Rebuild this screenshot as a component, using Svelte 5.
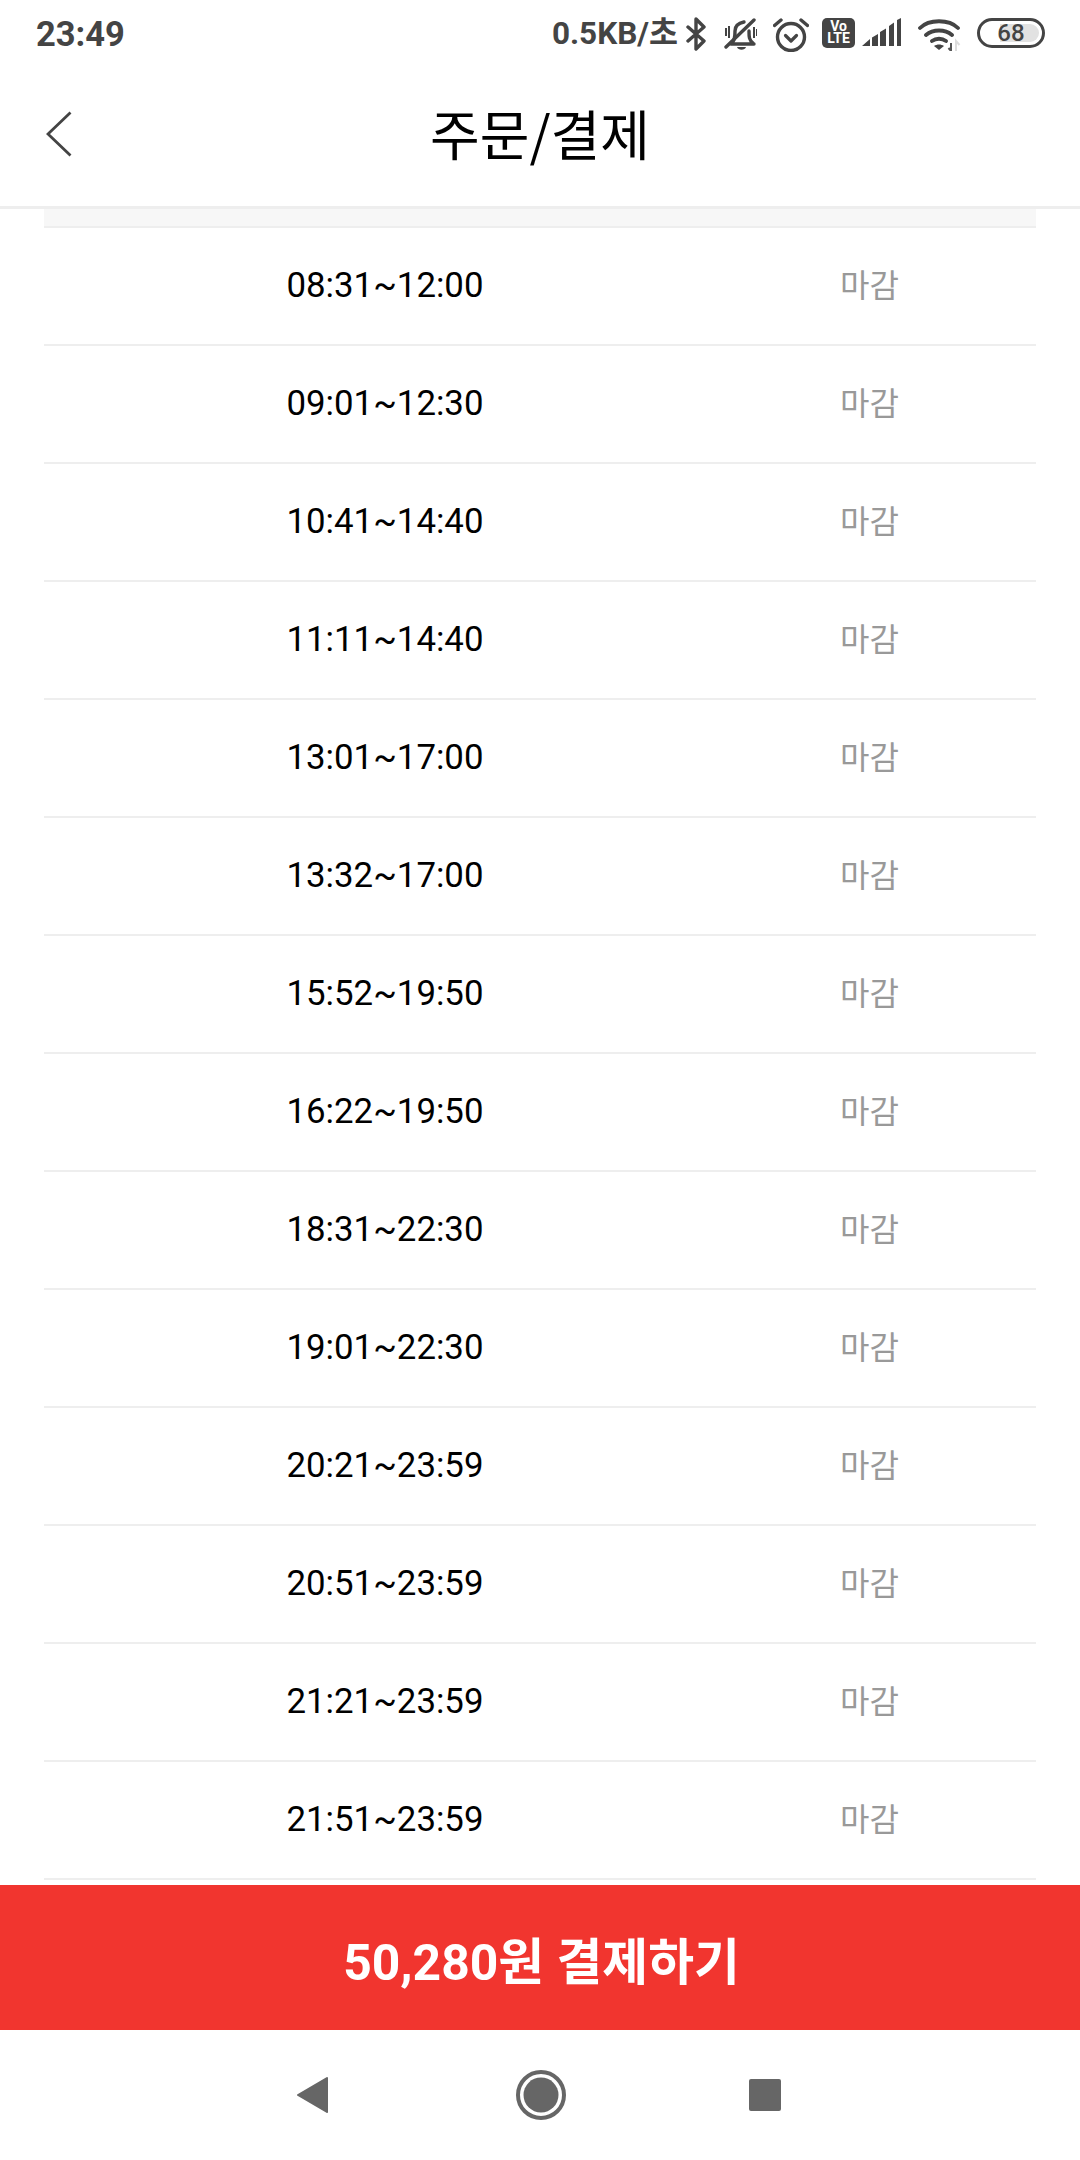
<script lang="ts">
  const slots = [
    "08:31~12:00",
    "09:01~12:30",
    "10:41~14:40",
    "11:11~14:40",
    "13:01~17:00",
    "13:32~17:00",
    "15:52~19:50",
    "16:22~19:50",
    "18:31~22:30",
    "19:01~22:30",
    "20:21~23:59",
    "20:51~23:59",
    "21:21~23:59",
    "21:51~23:59",
  ];
</script>

<div class="screen">
  <div class="status">
    <span class="clock">23:49</span>
    <div class="status-right">
      <span class="speed">0.5KB/초</span>
      <svg class="bt" width="21" height="34" viewBox="0 0 21 34">
        <path d="M2 10 18 24 10 32V2l8 8L2 24" fill="none" stroke="#444" stroke-width="3.4" stroke-linejoin="round" stroke-linecap="round" />
      </svg>
      <svg class="wide" width="34" height="33" viewBox="0 0 34 33">
        <path d="M9 25c3-3 3-7 3-12 0-5 4-8 9-9M26 13c0 6 0 9 4 12M8 26h23" fill="none" stroke="#444" stroke-width="3.4" stroke-linecap="round" />
        <path d="M3 29 31 2" stroke="#444" stroke-width="3.4" stroke-linecap="round" />
        <path d="M14 29h9c-1 3.500-8 3.500-9 0Z" fill="#444" />
        <path d="M3 10v8M6 8v12M31 9v11M34 11v7" stroke="#444" stroke-width="2" />
      </svg>
      <svg class="wide" width="36" height="35" viewBox="0 0 36 35">
        <circle cx="18" cy="20" r="13.500" fill="none" stroke="#444" stroke-width="3.400" />
        <path d="M12.500 18.500 18 24l5.500-5.500" fill="none" stroke="#444" stroke-width="3.200" stroke-linecap="round" stroke-linejoin="round" />
        <path d="M1.500 8.500 8 3M28 3l6.500 5.500" stroke="#444" stroke-width="3.400" stroke-linecap="round" />
      </svg>
      <svg class="volte" width="33" height="30" viewBox="0 0 33 30">
        <rect width="33" height="30" rx="5" fill="#444" />
        <text x="16.500" y="13" text-anchor="middle" class="volte-text">Vo</text>
        <text x="16.500" y="25" text-anchor="middle" class="volte-text">LTE</text>
      </svg>
      <svg class="signal" width="40" height="30" viewBox="0 0 40 30">
        <path d="M0 28 8 21v7ZM10 19.500 16 16v12h-6ZM18 14l6-3.500V28h-6ZM27 8l5-3.500V28h-5ZM35 2l4-2v28h-4Z" fill="#444" />
      </svg>
      <svg class="wide" width="43" height="33" viewBox="0 0 43 33">
        <path d="M2 10C11 1 31 1 40 10M8 17c7-6 19-6 26 0M14 23c4-3 10-3 14 0" fill="none" stroke="#444" stroke-width="3.800" stroke-linecap="round" />
        <path d="M16 28c3-2 7-2 10 0l-5 4Z" fill="#444" />
        <path d="M33 25v8M30.500 30l2.500 3" stroke="#555" stroke-width="2" fill="none" />
        <path d="M38 33v-10l3.500 4" stroke="#ddd" stroke-width="2" fill="none" />
      </svg>
      <div class="battery">
        <div class="battery-fill"></div>
        <span class="battery-num">68</span>
      </div>
    </div>
  </div>

  <header class="topbar">
    <svg class="back" width="26" height="46" viewBox="0 0 26 46">
      <path d="M24.500 1.500 2 23l22.500 21.500" fill="none" stroke="#444" stroke-width="2.800" />
    </svg>
    <h1>주문/결제</h1>
  </header>

  <div class="strip"></div>

  <ul class="slots">
    {#each slots as slot}
      <li class="slot">
        <span class="slot-time">{slot}</span>
        <span class="slot-state">마감</span>
      </li>
    {/each}
  </ul>

  <button class="pay">50,280원 결제하기</button>

  <nav class="softkeys">
    <svg width="33" height="38" viewBox="0 0 33 38">
      <path d="M31 2 2 19l29 17Z" fill="#666" stroke="#666" stroke-width="2" stroke-linejoin="round" />
    </svg>
    <svg width="50" height="50" viewBox="0 0 50 50">
      <circle cx="25" cy="25" r="23" fill="none" stroke="#666" stroke-width="4" />
      <circle cx="25" cy="25" r="17.500" fill="#666" />
    </svg>
    <div class="stop"></div>
  </nav>
</div>

<style>
  :global(body) {
    margin: 0;
    background: #fff;
  }
  ul {
    list-style: none;
    margin: 0;
    padding: 0;
  }
  .screen {
    width: 1080px;
    height: 2160px;
    display: flex;
    flex-direction: column;
    background: #fff;
    font-family: Roboto, "Noto Sans CJK KR", sans-serif;
    overflow: hidden;
  }
  .status {
    height: 72px;
    flex: none;
    display: flex;
    align-items: flex-start;
    justify-content: space-between;
    padding: 16px 35px 0 36px;
    box-sizing: border-box;
    color: #444;
  }
  .clock {
    font-size: 34.500px;
    font-weight: 700;
    line-height: 36px;
  }
  .status-right {
    display: flex;
    align-items: center;
    height: 36px;
  }
  .speed {
    font-size: 31.500px;
    font-weight: 700;
    line-height: 36px;
  }
  .bt {
    margin-left: 8px;
  }
  .wide {
    margin-left: 16px;
  }
  .volte {
    margin-left: 13px;
    margin-top: -2px;
  }
  .volte-text {
    font: 700 14px Roboto, sans-serif;
    fill: #fff;
  }
  .signal {
    margin-left: 7px;
    margin-top: -2px;
  }
  .battery {
    margin-left: 16px;
    width: 68px;
    height: 30px;
    box-sizing: border-box;
    border: 3.500px solid #444;
    border-radius: 15px;
    position: relative;
    display: flex;
    align-items: center;
    justify-content: center;
    margin-top: -2px;
  }
  .battery-fill {
    position: absolute;
    left: 20px;
    right: 3px;
    top: 3px;
    bottom: 3px;
    background: #e2e2e2;
    border-radius: 0 10px 10px 0;
  }
  .battery-num {
    position: relative;
    font-size: 24px;
    font-weight: 500;
    line-height: 1;
    color: #444;
  }
  .topbar {
    height: 134px;
    flex: none;
    border-bottom: 3px solid #eee;
    display: flex;
    align-items: center;
    justify-content: center;
    position: relative;
  }
  .back {
    position: absolute;
    left: 46px;
    top: 39px;
  }
  h1 {
    margin: 0 0 12px;
    font-size: 54px;
    font-weight: 400;
    color: #000;
    line-height: 1.2;
    font-family: "Noto Sans CJK KR", sans-serif;
  }
  .strip {
    height: 17px;
    flex: none;
    margin: 0 44px;
    background: #f7f7f7;
    border-bottom: 2px solid #eee;
  }
  .slots {
    margin: 0 44px;
    flex: none;
  }
  .slot {
    height: 118px;
    box-sizing: border-box;
    border-bottom: 2px solid #eee;
    display: grid;
    grid-template-columns: 682px 1fr;
    align-items: center;
    text-align: center;
  }
  .slot-time {
    font-size: 34.800px;
    color: #000;
    padding-bottom: 2px;
  }
  .slot-state {
    font-size: 32px;
    color: #999;
    padding: 0 23px 6px 0;
    font-family: "Noto Sans CJK KR", sans-serif;
  }
  .pay {
    margin-top: 5px;
    height: 145px;
    flex: none;
    border: 0;
    padding: 0 0 0 3px;
    background: #f1352f;
    color: #fff;
    font-family: Roboto, "Noto Sans CJK KR", sans-serif;
    font-size: 49.800px;
    font-weight: 700;
  }
  .softkeys {
    flex: 1;
    display: grid;
    grid-template-columns: 296px 33px 187px 50px 183px 32px;
    align-items: center;
  }
  .softkeys svg:nth-child(1) {
    grid-column: 2;
  }
  .softkeys svg:nth-child(2) {
    grid-column: 4;
  }
  .stop {
    grid-column: 6;
    height: 32px;
    background: #666;
    border-radius: 2px;
  }
</style>
